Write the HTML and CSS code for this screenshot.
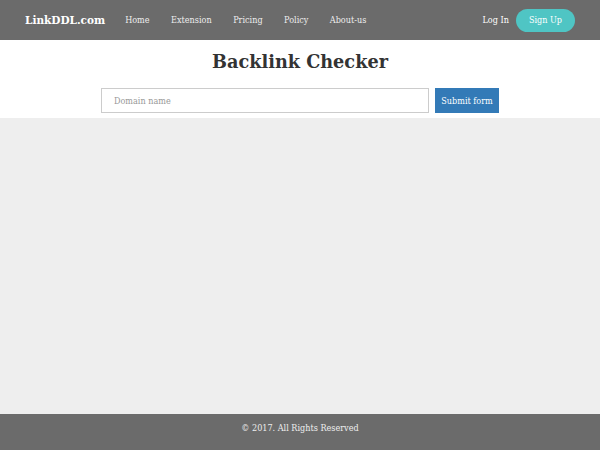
FILE: index.html
```html
<!DOCTYPE html>
<html lang="en">
<head>
  <meta charset="UTF-8">
  <meta name="viewport" content="width=device-width, initial-scale=1">
  <title>Backlink Checker</title>
  <link rel="stylesheet" href="styles.css">
</head>
<body>
  <!-- Barra superior -->
  <header class="topbar">
    <a class="brand" href="#">LinkDDL.com</a>
    <nav class="menu">
      <a href="#">Home</a>
      <a href="#">Extension</a>
      <a href="#">Pricing</a>
      <a href="#">Policy</a>
      <a href="#">About-us</a>
    </nav>
    <div class="account">
      <a class="login" href="#">Log In</a>
      <a class="signup" href="#">Sign Up</a>
    </div>
  </header>

  <!-- Formulario -->
  <section class="checker">
    <h1>Backlink Checker</h1>
    <form class="check-form">
      <input type="text" placeholder="Domain name">
      <button type="button">Submit form</button>
    </form>
  </section>

  <main class="results"></main>

  <footer class="footer">© 2017. All Rights Reserved</footer>
</body>
</html>
```

FILE: styles.css
```css
/* Estilos globales */
html, body {
  margin: 0;
  padding: 0;
  height: 100%;
}
body {
  display: flex;
  flex-direction: column;
  background: #eeeeee;
  font-family: "DejaVu Serif Condensed", "DejaVu Serif", serif;
  font-stretch: condensed;
  color: #333;
}
a {
  text-decoration: none;
}
/* Barra superior */
.topbar {
  display: flex;
  align-items: center;
  height: 40px;
  padding: 0 25px;
  background: #6b6b6b;
}
.brand {
  font-size: 11.7px;
  font-weight: bold;
  color: #fff;
  margin-right: 20px;
}
.menu {
  display: flex;
  gap: 21.5px;
  font-size: 9px;
}
.menu a {
  color: #eee;
}
.account {
  margin-left: auto;
  display: flex;
  align-items: center;
  gap: 7px;
  font-size: 9px;
}
.login {
  color: #fff;
}
.signup {
  color: #fff;
  background: #4fc5c4;
  border-radius: 12px;
  padding: 0 13px;
  height: 23px;
  line-height: 23px;
}
/* Sección del formulario */
.checker {
  background: #fff;
  padding: 9px 0 5px;
  text-align: center;
}
.checker h1 {
  margin: 0 0 13px;
  font-family: "DejaVu Serif", serif;
  font-stretch: normal;
  font-size: 17.7px;
  line-height: 26px;
  color: #333;
}
.check-form {
  display: flex;
  justify-content: center;
  gap: 6px;
}
.check-form input {
  box-sizing: border-box;
  width: 328px;
  height: 25px;
  padding: 0 12px;
  border: 1px solid #ccc;
  font-family: inherit;
  font-stretch: condensed;
  font-size: 9px;
  color: #555;
}
.check-form input::placeholder {
  color: #999;
}
.check-form button {
  box-sizing: border-box;
  width: 64px;
  height: 25px;
  padding: 0;
  border: none;
  background: #337ab7;
  color: #fff;
  font-family: inherit;
  font-stretch: condensed;
  font-size: 9px;
}
/* Área de resultados */
.results {
  flex: 1;
}
/* Pie de página */
.footer {
  height: 36px;
  background: #6b6b6b;
  color: #eee;
  font-size: 9px;
  text-align: center;
  line-height: 28px;
}
```
